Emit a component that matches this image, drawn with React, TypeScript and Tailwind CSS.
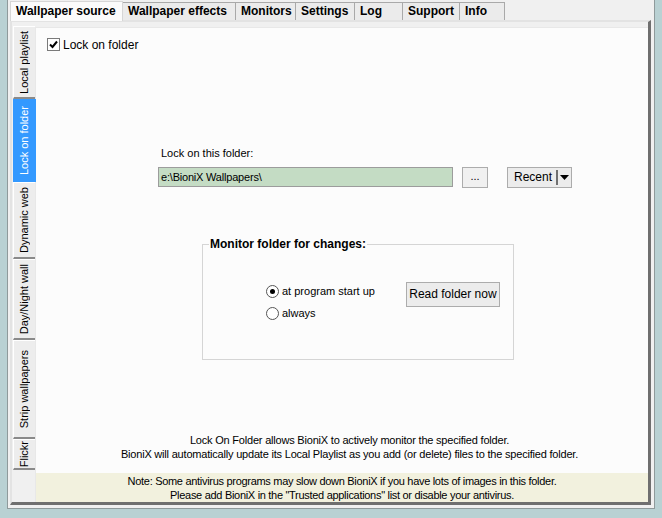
import React from 'react';

const topTabs = [
  { label: 'Wallpaper source', w: 'w-[113px]', active: true },
  { label: 'Wallpaper effects', w: 'w-[113px]' },
  { label: 'Monitors', w: 'w-[60px]' },
  { label: 'Settings', w: 'w-[59px]' },
  { label: 'Log', w: 'w-[48px]' },
  { label: 'Support', w: 'w-[57px]' },
  { label: 'Info', w: 'w-[45px]' },
];

const sideTabs = [
  { label: 'Local playlist', h: 'h-[73px]' },
  { label: 'Lock on folder', h: 'h-[83px]', active: true },
  { label: 'Dynamic web', h: 'h-[77px]' },
  { label: 'Day/Night wall', h: 'h-[81px]' },
  { label: 'Strip wallpapers', h: 'h-[99px]' },
  { label: 'Flickr', h: 'h-[31px]' },
];

const App: React.FC = () => {
  return (
    <div className="w-[662px] h-[518px] bg-[#b9d1d3] px-[7px] pb-[9px] font-['Liberation_Sans',Arial,sans-serif] text-[11px] text-black overflow-hidden">
      <div className="h-full bg-[#f0f0f0] border-x border-b border-[#8f9a9b] flex flex-col pl-[2px] pr-[3px] pb-[3px]">
        {/* top tabs */}
        <div className="flex items-end h-[20px] shrink-0">
          {topTabs.map((t) =>
            t.active ? (
              <div key={t.label} className={`${t.w} h-[20px] bg-[#fbfbfb] border-t border-l border-r border-[#d6d6d6] pl-[5px] pt-[1px] font-bold text-[12px] leading-[17px] relative z-10 -mb-px`}>
                {t.label}
              </div>
            ) : (
              <div key={t.label} className={`${t.w} h-[18px] bg-[#ebebeb] border-t border-r border-[#a9a9a9] first:border-l pl-[5px] font-bold text-[12px] leading-[17px]`}>
                {t.label}
              </div>
            )
          )}
        </div>
        {/* panel */}
        <div className="flex-1 flex bg-[#f0f0f0] border-t-2 border-l-2 border-[#e3e3e3] border-r-[3px] border-r-[#6f6f6f] border-b-[3px] border-b-[#6f6f6f] pt-[5px] pl-[1px]">
          {/* side tabs */}
          <div className="w-[22px] flex flex-col shrink-0 -mt-[1px]">
            {sideTabs.map((t) =>
              t.active ? (
                <div key={t.label} className={`${t.h} w-[23px] bg-[#3399ff] text-white flex items-center justify-center relative z-10`}>
                  <span className="[writing-mode:vertical-rl] rotate-180 text-[11px] leading-none whitespace-nowrap">{t.label}</span>
                </div>
              ) : (
                <div key={t.label} className={`${t.h} w-[22px] bg-[#ededed] border-t border-l border-[#ffffff] border-b-2 border-b-[#8a8a8a] flex items-center justify-center`}>
                  <span className="[writing-mode:vertical-rl] rotate-180 text-[11px] leading-none whitespace-nowrap">{t.label}</span>
                </div>
              )
            )}
          </div>
          {/* content */}
          <div className="flex-1 flex flex-col bg-[#fcfcfc] border-l border-t border-[#e8e8e8]">
            <div className="flex-1 flex flex-col pl-[11px] pt-[10px]">
              <label className="flex items-center gap-[3px] h-[13px]">
                <span className="w-[13px] h-[13px] border border-[#7a7a7a] bg-white flex items-center justify-center">
                  <svg width="11" height="11" viewBox="0 0 11 11">
                    <path d="M2 5.5 L4.5 8 L9 2.5" stroke="#000" strokeWidth="2" fill="none" />
                  </svg>
                </span>
                <span className="text-[12px]">Lock on folder</span>
              </label>

              <div className="ml-[111px] mt-[94px] flex flex-col">
                <span className="ml-[3px] text-[11px]">Lock on this folder:</span>
                <div className="flex items-center mt-[5px]">
                  <div className="w-[295px] h-[20px] bg-[#c4dcc4] border border-[#9c9c9c] pl-[2px] leading-[18px] text-[11px] tracking-[-0.2px]">e:\BioniX Wallpapers\</div>
                  <button className="ml-[9px] w-[26px] h-[21px] bg-[#f0f0f0] border border-[#acacac] text-[11px] leading-none pb-[2px]">...</button>
                  <div className="ml-[19px] w-[65px] h-[21px] bg-[#ececec] border border-[#acacac] flex items-center">
                    <span className="flex-1 text-center text-[12px] pl-[2px]">Recent</span>
                    <span className="w-[2px] h-[15px] bg-[#707070]" />
                    <span className="w-[13px] flex justify-center">
                      <svg width="9" height="5" viewBox="0 0 9 5"><path d="M0 0 H9 L4.5 5 Z" fill="#000" /></svg>
                    </span>
                  </div>
                </div>
              </div>

              <div className="ml-[155px] mt-[56px] w-[312px] h-[116px] border border-[#d5d5d5] relative">
                <span className="absolute -top-[8px] left-[6px] bg-[#fcfcfc] px-[1px] font-bold text-[12px] leading-[14px]">Monitor folder for changes:</span>
                <div className="flex mt-[38px] ml-[63px]">
                  <div className="flex flex-col gap-[9px] mt-[2px]">
                    <div className="flex items-center gap-[3px] h-[13px]">
                      <span className="w-[13px] h-[13px] rounded-full border border-[#555] bg-white flex items-center justify-center">
                        <span className="w-[5px] h-[5px] rounded-full bg-black" />
                      </span>
                      <span className="text-[11px]">at program start up</span>
                    </div>
                    <div className="flex items-center gap-[3px] h-[13px]">
                      <span className="w-[13px] h-[13px] rounded-full border border-[#555] bg-white" />
                      <span className="text-[11px]">always</span>
                    </div>
                  </div>
                  <button className="ml-[31px] -mt-[1px] w-[94px] h-[25px] bg-[#ececec] border border-[#acacac] text-[12px]">Read folder now</button>
                </div>
              </div>

              <div className="mt-auto mb-[12px] flex flex-col items-center text-[11px] leading-[14px] tracking-[-0.2px] pl-[4px]">
                <span>Lock On Folder allows BioniX to actively monitor the specified folder.</span>
                <span>BioniX will automatically update its Local Playlist as you add (or delete) files to the specified folder.</span>
              </div>
            </div>
            <div className="h-[29px] bg-[#f2f1de] flex flex-col items-center justify-center text-[11px] leading-[14px] tracking-[-0.3px]">
              <span>Note: Some antivirus programs may slow down BioniX if you have lots of images in this folder.</span>
              <span>Please add BioniX in the "Trusted applications" list or disable your antivirus.</span>
            </div>
          </div>
        </div>
      </div>
    </div>
  );
};

export default App;
